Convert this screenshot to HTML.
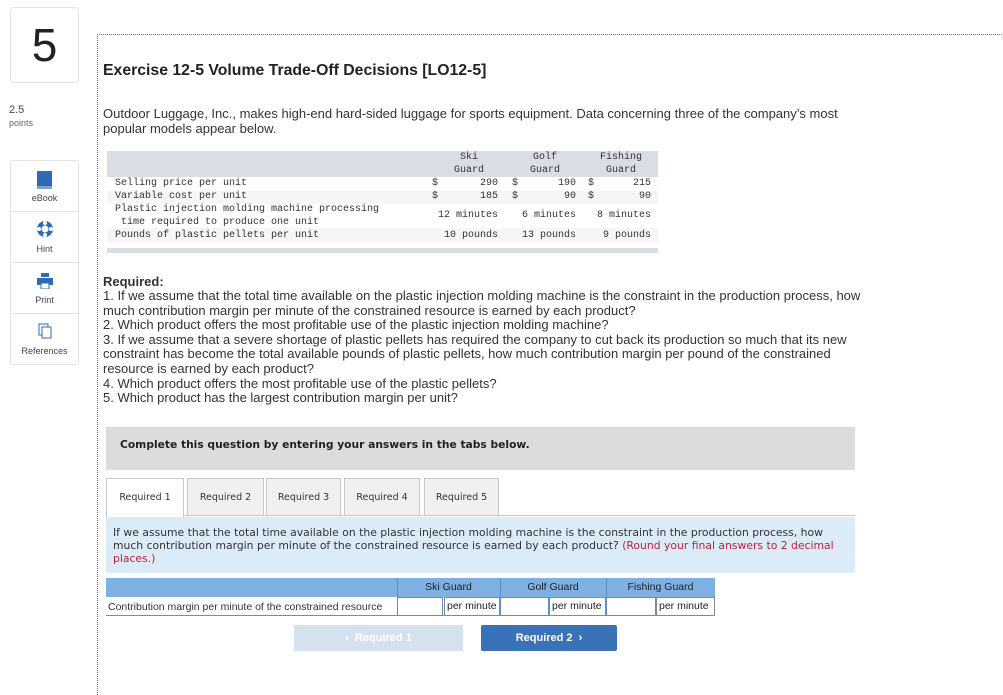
<!DOCTYPE html>
<html><head><style>
body{margin:0;width:1003px;height:680px;position:relative;background:#fff;font-family:"Liberation Sans",sans-serif;color:#222;overflow:hidden}
.a{position:absolute;white-space:nowrap}
.m{font-family:"Liberation Mono",monospace;font-size:10px;color:#333}
.p{font-size:13px;color:#333}
.side{position:absolute;left:10px;width:67px;border:1px solid #e3e3e3;background:#fff}
.tool{height:50px;border-bottom:1px solid #e3e3e3;text-align:center;font-size:9px;color:#444;position:relative}
.tool span{position:absolute;left:0;right:0;bottom:8px}
.tab{position:absolute;top:478px;height:38px;border:1px solid #c8c8c8;background:#f0f0f0;font-family:"DejaVu Sans",sans-serif;font-size:9.5px;color:#333;text-align:center;line-height:38px;box-sizing:border-box}
.rt{font-family:"DejaVu Sans",sans-serif;font-size:10.8px;color:#333}
</style></head><body>
<div class="side" style="top:7px;height:74px;border-radius:4px;text-align:center;font-size:46px;line-height:74px;color:#222">5</div>
<div class="a" style="left:9px;top:104px;font-size:11px;color:#2a4a7a">2.5</div>
<div class="a" style="left:9px;top:118px;font-size:9px;color:#666">points</div>
<div class="side" style="top:160px;border-radius:3px">
 <div class="tool"><svg style="position:absolute;left:26px;top:10px" width="15" height="18"><rect x="0" y="0" width="15" height="15" fill="#2f6ab4"/><rect x="0" y="15" width="15" height="3" fill="#7ea3d3"/></svg><span>eBook</span></div>
 <div class="tool"><svg style="position:absolute;left:25px;top:8px" width="18" height="18"><circle cx="9" cy="9" r="8" fill="#2f6ab4"/><circle cx="9" cy="9" r="3.5" fill="#fff"/><circle cx="9" cy="3" r="2" fill="#fff"/><circle cx="9" cy="15" r="2" fill="#fff"/><circle cx="3" cy="9" r="2" fill="#fff"/><circle cx="15" cy="9" r="2" fill="#fff"/></svg><span>Hint</span></div>
 <div class="tool"><svg style="position:absolute;left:26px;top:10px" width="16" height="16"><rect x="4" y="0" width="8" height="4" fill="#2f6ab4"/><rect x="0" y="5" width="16" height="7" fill="#2f6ab4"/><rect x="4" y="10" width="8" height="6" fill="#fff" stroke="#2f6ab4"/></svg><span>Print</span></div>
 <div class="tool" style="border-bottom:none"><svg style="position:absolute;left:27px;top:9px" width="14" height="16"><rect x="1" y="1" width="9" height="11" fill="#fff" stroke="#2f6ab4"/><rect x="4" y="4" width="9" height="11" fill="#fff" stroke="#2f6ab4"/></svg><span>References</span></div>
</div>
<div class="a" style="left:97px;top:34px;width:906px;height:660px;border-left:1px dotted #5b7fb0;border-top:1px dotted #5b7fb0"></div>
<div class="a" style="left:103px;top:62px;font-size:15.8px;font-weight:bold;color:#222">Exercise 12-5 Volume Trade-Off Decisions [LO12-5]</div>
<div class="a p" style="left:103px;top:106px">Outdoor Luggage, Inc., makes high-end hard-sided luggage for sports equipment. Data concerning three of the company’s most</div>
<div class="a p" style="left:103px;top:121px">popular models appear below.</div>
<div class="a" style="left:107px;top:151px;width:551px;height:26px;background:#d9dde4"></div>
<div class="a" style="left:107px;top:191px;width:551px;height:13px;background:#f6f6f6"></div>
<div class="a" style="left:107px;top:228px;width:551px;height:15px;background:#f6f6f6"></div>
<div class="a" style="left:107px;top:248px;width:551px;height:5px;background:#d9dde4"></div>
<div class="a m" style="left:450px;top:151px;width:38px;text-align:center;line-height:13px">Ski<br>Guard</div>
<div class="a m" style="left:526px;top:151px;width:38px;text-align:center;line-height:13px">Golf<br>Guard</div>
<div class="a m" style="left:596px;top:151px;width:50px;text-align:center;line-height:13px">Fishing<br>Guard</div>
<div class="a m" style="left:115px;top:178px">Selling price per unit</div>
<div class="a m" style="left:115px;top:191px">Variable cost per unit</div>
<div class="a m" style="left:115px;top:204px">Plastic injection molding machine processing</div>
<div class="a m" style="left:115px;top:217px">&nbsp;time required to produce one unit</div>
<div class="a m" style="left:115px;top:230px">Pounds of plastic pellets per unit</div>
<div class="a m" style="left:432px;top:178px">$</div><div class="a m" style="left:432px;top:191px">$</div>
<div class="a m" style="left:512px;top:178px">$</div><div class="a m" style="left:512px;top:191px">$</div>
<div class="a m" style="left:588px;top:178px">$</div><div class="a m" style="left:588px;top:191px">$</div>
<div class="a m" style="left:440px;top:178px;width:58px;text-align:right">290</div>
<div class="a m" style="left:440px;top:191px;width:58px;text-align:right">185</div>
<div class="a m" style="left:520px;top:178px;width:56px;text-align:right">190</div>
<div class="a m" style="left:520px;top:191px;width:56px;text-align:right">90</div>
<div class="a m" style="left:595px;top:178px;width:56px;text-align:right">215</div>
<div class="a m" style="left:595px;top:191px;width:56px;text-align:right">90</div>
<div class="a m" style="left:400px;top:210px;width:98px;text-align:right">12 minutes</div>
<div class="a m" style="left:480px;top:210px;width:96px;text-align:right">6 minutes</div>
<div class="a m" style="left:555px;top:210px;width:96px;text-align:right">8 minutes</div>
<div class="a m" style="left:400px;top:230px;width:98px;text-align:right">10 pounds</div>
<div class="a m" style="left:480px;top:230px;width:96px;text-align:right">13 pounds</div>
<div class="a m" style="left:555px;top:230px;width:96px;text-align:right">9 pounds</div>
<div class="a p" style="left:103px;top:274px;font-weight:bold">Required:</div>
<div class="a p" style="left:103px;top:289px;line-height:14.6px">1. If we assume that the total time available on the plastic injection molding machine is the constraint in the production process, how<br>much contribution margin per minute of the constrained resource is earned by each product?<br>2. Which product offers the most profitable use of the plastic injection molding machine?<br>3. If we assume that a severe shortage of plastic pellets has required the company to cut back its production so much that its new<br>constraint has become the total available pounds of plastic pellets, how much contribution margin per pound of the constrained<br>resource is earned by each product?<br>4. Which product offers the most profitable use of the plastic pellets?<br>5. Which product has the largest contribution margin per unit?</div>
<div class="a" style="left:106px;top:427px;width:749px;height:43px;background:#dcdcdc"></div>
<div class="a" style="left:120px;top:438px;font-family:'DejaVu Sans',sans-serif;font-size:10.7px;font-weight:bold;color:#222">Complete this question by entering your answers in the tabs below.</div>
<div class="a" style="left:106px;top:515px;width:749px;height:1px;background:#c8c8c8"></div>
<div class="tab" style="left:106px;width:78px;background:#fff;border-bottom:none;height:39px">Required 1</div>
<div class="tab" style="left:187px;width:77px">Required 2</div>
<div class="tab" style="left:266px;width:75px">Required 3</div>
<div class="tab" style="left:344px;width:76px">Required 4</div>
<div class="tab" style="left:424px;width:75px">Required 5</div>
<div class="a" style="left:106px;top:517px;width:749px;height:56px;background:#dcebf8"></div>
<div class="a rt" style="left:113px;top:526px;line-height:13px">If we assume that the total time available on the plastic injection molding machine is the constraint in the production process, how<br>much contribution margin per minute of the constrained resource is earned by each product? <span style="color:#c0203a">(Round your final answers to 2 decimal</span><br><span style="color:#c0203a">places.)</span></div>
<div class="a" style="left:106px;top:578px;width:609px;height:19px;background:#7fb0e4"></div>
<div class="a" style="left:397px;top:578px;width:1px;height:19px;background:#5a8fc8"></div>
<div class="a" style="left:500px;top:578px;width:1px;height:19px;background:#5a8fc8"></div>
<div class="a" style="left:606px;top:578px;width:1px;height:19px;background:#5a8fc8"></div>
<div class="a" style="left:397px;top:581px;width:103px;text-align:center;font-size:10.5px">Ski Guard</div>
<div class="a" style="left:500px;top:581px;width:106px;text-align:center;font-size:10.5px">Golf Guard</div>
<div class="a" style="left:606px;top:581px;width:109px;text-align:center;font-size:10.5px">Fishing Guard</div>
<div class="a" style="left:106px;top:597px;width:609px;height:19px;border-bottom:1px solid #888;box-sizing:border-box"></div>
<div class="a" style="left:108px;top:601px;font-size:10.5px;color:#333">Contribution margin per minute of the constrained resource</div>
<div class="a" style="left:397px;top:597px;width:46px;height:19px;border:1px solid #5a8fc8;box-sizing:border-box;background:#fff"></div>
<div class="a" style="left:444px;top:597px;width:56px;height:19px;border:1px solid #888;box-sizing:border-box;font-size:10.5px;line-height:17px;padding-left:2px">per minute</div>
<div class="a" style="left:500px;top:597px;width:49px;height:19px;border:1px solid #5a8fc8;box-sizing:border-box;background:#fff"></div>
<div class="a" style="left:549px;top:597px;width:57px;height:19px;border:1px solid #888;box-sizing:border-box;font-size:10.5px;line-height:17px;padding-left:2px">per minute</div>
<div class="a" style="left:606px;top:597px;width:50px;height:19px;border:1px solid #5a8fc8;box-sizing:border-box;background:#fff"></div>
<div class="a" style="left:656px;top:597px;width:59px;height:19px;border:1px solid #888;box-sizing:border-box;font-size:10.5px;line-height:17px;padding-left:2px">per minute</div>
<div class="a" style="left:294px;top:625px;width:169px;height:26px;background:#d5e1ef;color:#fff;font-size:11px;font-weight:bold;text-align:center;line-height:26px">&lsaquo;&nbsp; Required 1</div>
<div class="a" style="left:481px;top:625px;width:136px;height:26px;background:#3a72b8;border-radius:2px;color:#fff;font-size:11px;font-weight:bold;text-align:center;line-height:26px">Required 2 &nbsp;&rsaquo;</div>
</body></html>
